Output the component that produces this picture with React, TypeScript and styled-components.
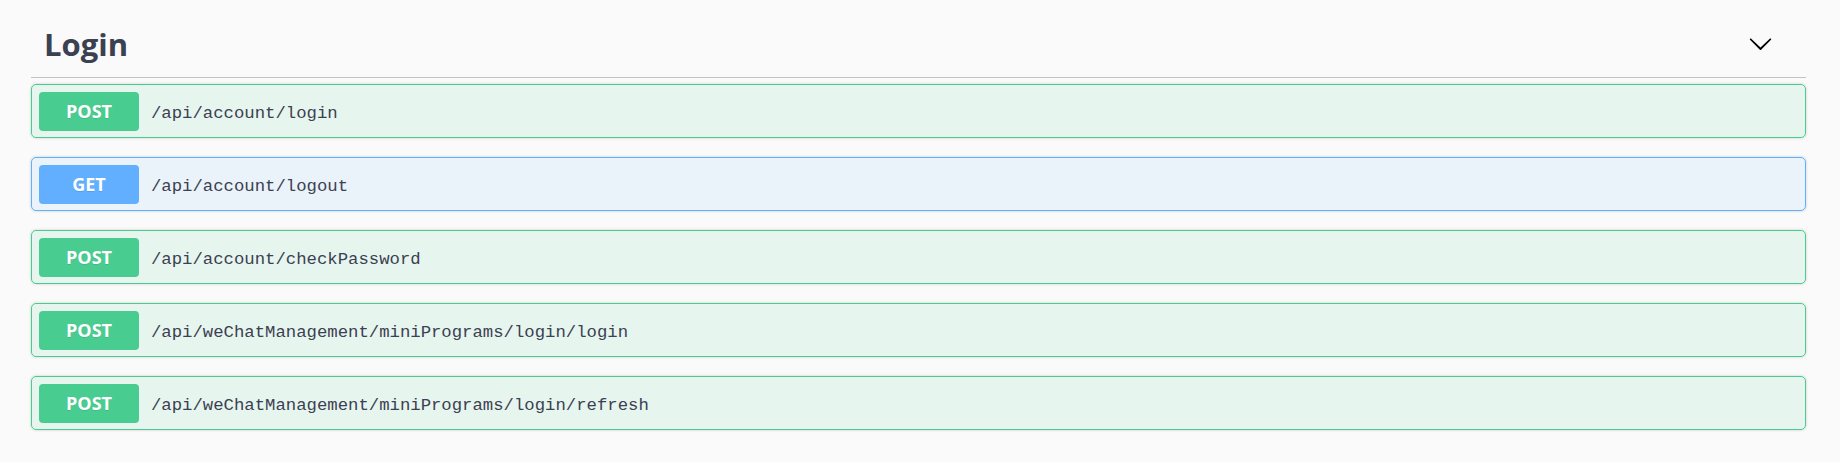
import React from "react";
import styled, { createGlobalStyle } from "styled-components";

const Global = createGlobalStyle`
  html, body { margin: 0; padding: 0; background: #fafafa; }
  body { font-family: "Open Sans", "Noto Sans", sans-serif; }
  * { box-sizing: border-box; }
`;

type Method = "post" | "get";

const colors: Record<Method, { main: string; bg: string }> = {
  post: { main: "#49cc90", bg: "rgba(73, 204, 144, 0.1)" },
  get: { main: "#61affe", bg: "rgba(97, 175, 254, 0.1)" },
};

const Page = styled.div`
  width: 1840px;
  height: 462px;
  padding: 10px 34px 0 31px;
  background: #fafafa;
`;

const TagHeader = styled.h3`
  display: flex;
  align-items: center;
  justify-content: space-between;
  margin: 0 0 6px;
  padding: 13.5px 33px 13.5px 13px;
  border-bottom: 1px solid rgba(59, 65, 81, 0.3);
`;

const TagTitle = styled.span`
  font-family: "Open Sans", "Noto Sans", sans-serif;
  font-weight: 700;
  font-size: 31px;
  line-height: 40px;
  color: #3b4151;
`;

const Arrow = styled.svg`
  width: 25px;
  height: 25px;
  display: block;
  fill: #000;
`;

const OpList = styled.div`
  display: flex;
  flex-direction: column;
  gap: 19px;
`;

const OpBlock = styled.div<{ $method: Method }>`
  display: flex;
  align-items: center;
  height: 54px;
  padding: 0 7px;
  border: 1px solid ${(p) => colors[p.$method].main};
  background: ${(p) => colors[p.$method].bg};
  border-radius: 5px;
  box-shadow: 0 0 3px rgba(0, 0, 0, 0.19);
`;

const MethodBadge = styled.span<{ $method: Method }>`
  display: flex;
  align-items: center;
  justify-content: center;
  width: 100px;
  height: 39px;
  margin-top: 0px;
  border-radius: 4px;
  background: ${(p) => colors[p.$method].main};
  color: #fff;
  font-family: "Open Sans", "Noto Sans", sans-serif;
  font-weight: 700;
  font-size: 18px;
  text-shadow: 0 1px 0 rgba(0, 0, 0, 0.1);
`;

const Path = styled.span`
  padding: 4px 12px 0;
  font-family: "Liberation Mono", "DejaVu Sans Mono", monospace;
  font-size: 17.3px;
  color: #3b4151;
`;

const ops: { method: Method; path: string }[] = [
  { method: "post", path: "/api/account/login" },
  { method: "get", path: "/api/account/logout" },
  { method: "post", path: "/api/account/checkPassword" },
  { method: "post", path: "/api/weChatManagement/miniPrograms/login/login" },
  { method: "post", path: "/api/weChatManagement/miniPrograms/login/refresh" },
];

export default function App() {
  return (
    <Page>
      <Global />
      <TagHeader>
        <TagTitle>Login</TagTitle>
        <Arrow viewBox="0 0 20 20" aria-hidden="true">
          <path d="M17.418 6.109c.272-.268.709-.268.979 0s.271.701 0 .969l-7.908 7.83c-.27.268-.707.268-.979 0l-7.908-7.83c-.27-.268-.27-.701 0-.969.271-.268.709-.268.979 0L10 13.25l7.418-7.141z" />
        </Arrow>
      </TagHeader>
      <OpList>
        {ops.map((op) => (
          <OpBlock key={op.path} $method={op.method}>
            <MethodBadge $method={op.method}>{op.method.toUpperCase()}</MethodBadge>
            <Path>{op.path}</Path>
          </OpBlock>
        ))}
      </OpList>
    </Page>
  );
}
